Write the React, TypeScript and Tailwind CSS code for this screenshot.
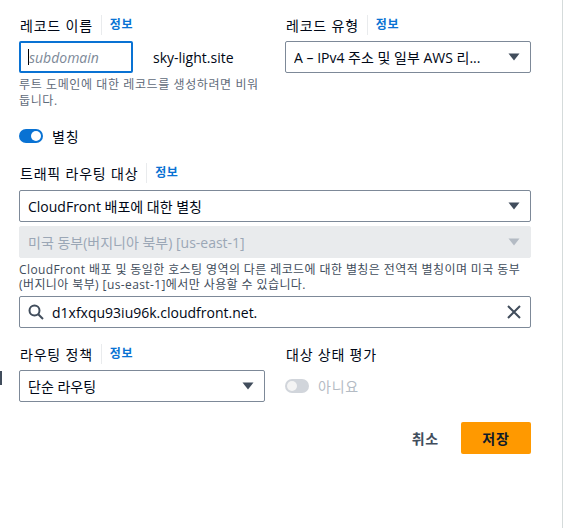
import React from "react";

const font = { fontFamily: '"Open Sans", "Noto Sans CJK KR", sans-serif' };

function Caret({ disabled = false }: { disabled?: boolean }) {
  return (
    <svg width="12" height="8" viewBox="0 0 12 8" className="shrink-0">
      <path d="M0.5 0.5 H11.5 L6 7.5 Z" fill={disabled ? "#b4bbc4" : "#414d5c"} />
    </svg>
  );
}

function Label({ text, info = true }: { text: string; info?: boolean }) {
  return (
    <div className="flex items-center h-5 text-[14px] tracking-[0.8px] text-[#000716]">
      <span>{text}</span>
      {info && (
        <>
          <span className="mx-[8px] h-[20px] w-px bg-[#e9ebed]" />
          <span className="font-bold text-[12px] tracking-[0.5px] text-[#0972d3]">정보</span>
        </>
      )}
    </div>
  );
}

function Select({ value, disabled = false }: { value: string; disabled?: boolean }) {
  return (
    <div
      className={
        disabled
          ? "flex items-center justify-between h-8 rounded-[2px] border border-[#e9ebed] bg-[#e9ebed] pl-[8px] pr-[10px] text-[14px] text-[#9ba7b6]"
          : "flex items-center justify-between h-8 rounded-[2px] border border-[#7d8998] bg-white pl-[8px] pr-[10px] text-[14px] text-[#000716]"
      }
    >
      <span className="truncate">{value}</span>
      <Caret disabled={disabled} />
    </div>
  );
}

export default function App() {
  return (
    <div className="min-h-[528px] w-[563px] border-r border-[#d5dbdb] bg-white" style={font}>
      <div className="w-[512px] ml-[19px] pt-[15px]">
        {/* record name + type */}
        <div className="grid grid-cols-2 gap-5">
          <div>
            <div className="pl-px"><Label text="레코드 이름" /></div>
            <div className="mt-[6px] flex items-center">
              <div className="flex h-8 w-[114px] items-center rounded-[2px] border-2 border-[#0972d3] pl-[7px]">
                <span className="h-[16px] w-px bg-black" />
                <span className="text-[14px] italic text-[#7d8998]">subdomain</span>
              </div>
              <span className="ml-5 text-[14px] text-[#000716]">sky-light.site</span>
            </div>
            <p className="mt-[4px] w-[250px] text-[12px] leading-4 tracking-[0.6px] text-[#5f6b7a]">
              루트 도메인에 대한 레코드를 생성하려면 비워 둡니다.
            </p>
          </div>
          <div>
            <div className="pl-px"><Label text="레코드 유형" /></div>
            <div className="mt-[6px]">
              <Select value="A – IPv4 주소 및 일부 AWS 리..." />
            </div>
          </div>
        </div>

        {/* alias toggle */}
        <div className="mt-[17px] flex h-5 items-center">
          <div className="flex h-[14px] w-6 items-center rounded-full bg-[#0972d3] pl-[12px]">
            <span className="h-[10px] w-[10px] rounded-full bg-white" />
          </div>
          <span className="ml-[9px] text-[14px] tracking-[0.8px] text-[#000716]">별칭</span>
        </div>

        {/* routing target */}
        <div className="mt-[17px] pl-px"><Label text="트래픽 라우팅 대상" /></div>
        <div className="mt-[7px] flex flex-col gap-1">
          <Select value="CloudFront 배포에 대한 별칭" />
          <Select value="미국 동부(버지니아 북부) [us-east-1]" disabled />
        </div>
        <p className="mt-1 text-[12px] leading-[15px] tracking-[0.4px] text-[#414d5c]">
          CloudFront 배포 및 동일한 호스팅 영역의 다른 레코드에 대한 별칭은 전역적 별칭이며 미국 동부 (버지니아 북부) [us-east-1]에서만 사용할 수 있습니다.
        </p>
        <div className="mt-1 flex h-8 items-center rounded-[2px] border border-[#7d8998] pl-[8px] pr-[9px]">
          <svg width="16" height="16" viewBox="0 0 16 16" fill="none" stroke="#414d5c" strokeWidth="2" className="shrink-0">
            <circle cx="6.5" cy="6.5" r="5" />
            <path d="M10.2 10.2 L15 15" />
          </svg>
          <span className="ml-[8px] flex-1 text-[14px] text-[#000716]">d1xfxqu93iu96k.cloudfront.net.</span>
          <svg width="14" height="14" viewBox="0 0 14 14" fill="none" stroke="#414d5c" strokeWidth="2" className="shrink-0">
            <path d="M1 1 L13 13 M13 1 L1 13" />
          </svg>
        </div>

        {/* routing policy + health */}
        <div className="relative mt-4 grid grid-cols-2 gap-5">
          <span className="absolute left-[-19px] top-[27px] h-[14px] w-[2px] bg-[#414d5c]" />
          <div>
            <div className="pl-px"><Label text="라우팅 정책" /></div>
            <div className="mt-[6px]">
              <Select value="단순 라우팅" />
            </div>
          </div>
          <div>
            <div className="pl-px"><Label text="대상 상태 평가" info={false} /></div>
            <div className="mt-[6px] flex h-8 items-center">
              <div className="flex h-[14px] w-6 items-center rounded-full bg-[#d1d5db] pl-[2px]">
                <span className="h-[10px] w-[10px] rounded-full bg-[#f4f4f4]" />
              </div>
              <span className="ml-[9px] text-[14px] tracking-[0.8px] text-[#b4bbc4]">아니요</span>
            </div>
          </div>
        </div>

        {/* actions */}
        <div className="mt-5 flex items-center justify-end">
          <span className="mr-[22px] text-[14px] font-bold tracking-[0.8px] text-[#414d5c]">취소</span>
          <div className="flex h-8 w-[70px] items-center justify-center rounded-[2px] bg-[#ff9900] text-[14px] font-bold tracking-[0.8px] text-[#0f1b2a]">
            저장
          </div>
        </div>
      </div>
    </div>
  );
}
